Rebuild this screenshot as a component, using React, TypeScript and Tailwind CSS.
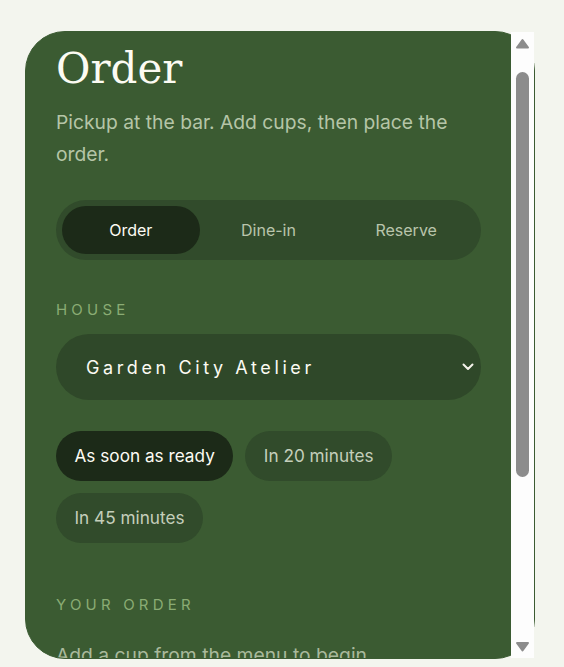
import React, { useState } from 'react';

const modes = ['Order', 'Dine-in', 'Reserve'];
const times = ['As soon as ready', 'In 20 minutes', 'In 45 minutes'];

function Chevron() {
  return (
    <svg width="12" height="8" viewBox="0 0 12 8" fill="none" className="shrink-0">
      <path d="M1.5 1.5L6 6l4.5-4.5" stroke="#f4f2ea" strokeWidth="2" strokeLinecap="round" strokeLinejoin="round" />
    </svg>
  );
}

function Arrow({ down = false }: { down?: boolean }) {
  return (
    <svg width="15" height="11" viewBox="0 0 15 11" className="shrink-0">
      <path
        d={down ? 'M2 2h11L7.5 9.5z' : 'M2 9.5h11L7.5 2z'}
        fill="#8c8c8c"
        stroke="#8c8c8c"
        strokeWidth="2"
        strokeLinejoin="round"
      />
    </svg>
  );
}

// classic scrollbar column, drawn beside the panel content
function Scrollbar() {
  return (
    <div className="flex w-[23px] shrink-0 flex-col items-center bg-[#fdfdfd] pt-[6px] pb-[6px]">
      <Arrow />
      <div className="mt-[23px] h-[405px] w-[13px] rounded-full bg-[#8c8c8c]" />
      <div className="flex-1" />
      <Arrow down />
    </div>
  );
}

export default function App() {
  const [mode, setMode] = useState('Order');
  const [time, setTime] = useState('As soon as ready');

  return (
    <div className="min-h-screen bg-[#f3f5ee] pt-[31px] pl-[25px]" style={{ fontFamily: 'Inter, "Liberation Sans", sans-serif' }}>
      <aside className="flex h-[628px] w-[510px] rounded-[40px] border border-[#3b5b32] bg-[#3b5b32]">
        <div className="min-w-0 flex-1 overflow-hidden rounded-l-[39px] px-[30px] pt-[13px]">
          <h1 className="text-[42px] leading-[48px] text-[#fcfbf3]" style={{ fontFamily: '"DejaVu Serif", serif' }}>
            Order
          </h1>
          <p className="mt-[13px] text-[19.3px] leading-[32px] text-[#b5c5a7]">
            Pickup at the bar. Add cups, then place the order.
          </p>

          {/* Mode switch */}
          <div className="mt-[30px] grid grid-cols-3 rounded-full bg-[#314b2b] p-[6px]">
            {modes.map((m) => (
              <button
                key={m}
                onClick={() => setMode(m)}
                className={`h-[48px] rounded-full text-[16px] ${mode === m ? 'bg-[#1c2a18] text-[#fcfbf3]' : 'text-[#b9c5ac]'}`}
              >
                {m}
              </button>
            ))}
          </div>

          {/* House */}
          <div className="mt-[40px] text-[15px] leading-[20px] tracking-[0.28em] text-[#8aac74]">HOUSE</div>
          <button className="mt-[14px] flex h-[66px] w-full items-center justify-between rounded-full bg-[#2f4829] pl-[30px] pr-[7px]">
            <span className="text-[18px] tracking-[0.2em] text-[#fcfbf3]">Garden City Atelier</span>
            <Chevron />
          </button>

          {/* Pickup time */}
          <div className="mt-[31px] flex flex-wrap gap-[12px]">
            {times.map((t) => (
              <button
                key={t}
                onClick={() => setTime(t)}
                className={`h-[50px] rounded-full px-[18.5px] text-[17.2px] ${time === t ? 'bg-[#1c2a18] text-[#fcfbf3]' : 'bg-[#314b2b] text-[#c5cfbb]'}`}
              >
                {t}
              </button>
            ))}
          </div>

          {/* Cart */}
          <div className="mt-[52px] text-[15px] leading-[20px] tracking-[0.28em] text-[#8aac74]">YOUR ORDER</div>
          <p className="mt-[24px] text-[19.3px] leading-[32px] text-[#a9b99c]">Add a cup from the menu to begin.</p>
        </div>
        <Scrollbar />
      </aside>
    </div>
  );
}
